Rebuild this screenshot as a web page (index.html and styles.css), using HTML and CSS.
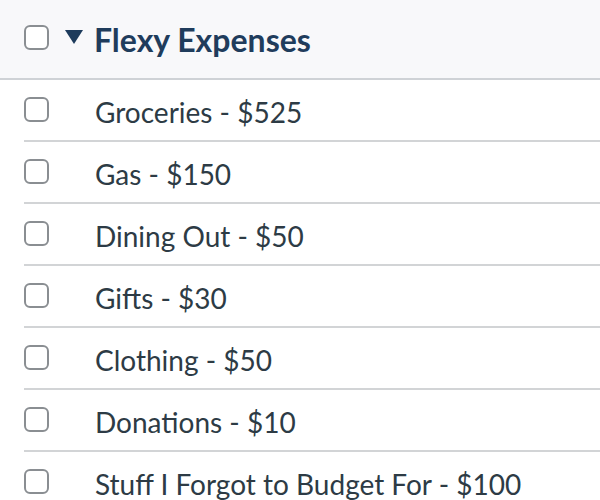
FILE: index.html
```html
<!DOCTYPE html>
<html>
<head>
<meta charset="utf-8">
<link rel="stylesheet" href="styles.css">
</head>
<body>
<div class="list">
  <div class="header">
    <span class="box"></span>
    <span class="caret"></span>
    <span class="title">Flexy Expenses</span>
  </div>
  <div class="items">
    <div class="row"><span class="box"></span><span class="label">Groceries - $525</span></div>
    <div class="row"><span class="box"></span><span class="label">Gas - $150</span></div>
    <div class="row"><span class="box"></span><span class="label">Dining Out - $50</span></div>
    <div class="row"><span class="box"></span><span class="label">Gifts - $30</span></div>
    <div class="row"><span class="box"></span><span class="label">Clothing - $50</span></div>
    <div class="row"><span class="box"></span><span class="label">Donations - $10</span></div>
    <div class="row"><span class="box"></span><span class="label">Stuff I Forgot to Budget For - $100</span></div>
  </div>
</div>
</body>
</html>
```
FILE: styles.css
```css
html, body {
  margin: 0;
  padding: 0;
  background: #ffffff;
  overflow: hidden;
}
body {
  font-family: Lato, "Open Sans", sans-serif;
  width: 600px;
  height: 500px;
}
.header {
  height: 78px;
  background: #f8f8fa;
  border-bottom: 2px solid #cfd2d6;
  display: flex;
  align-items: center;
  padding-left: 24px;
}
.box {
  width: 21px;
  height: 21px;
  border: 2px solid #8a8e92;
  border-radius: 6px;
  background: #fff;
  flex: none;
}
.header .box {
  margin-top: -4px;
}
.caret {
  width: 0;
  height: 0;
  border-left: 9px solid transparent;
  border-right: 9px solid transparent;
  border-top: 14px solid #1d3b5c;
  margin-left: 16px;
  margin-right: 11px;
  margin-top: -4px;
}
.title {
  font-weight: 700;
  font-size: 32px;
  color: #1f3c5c;
}
.items {
  margin-left: 24px;
}
.row {
  height: 60px;
  border-bottom: 2px solid #d2d4d6;
  display: flex;
  align-items: center;
}
.row .box {
  margin-top: -2px;
}
.row .label {
  margin-left: 46px;
  padding-top: 3px;
  font-size: 28px;
  color: #2d3b45;
}
```
